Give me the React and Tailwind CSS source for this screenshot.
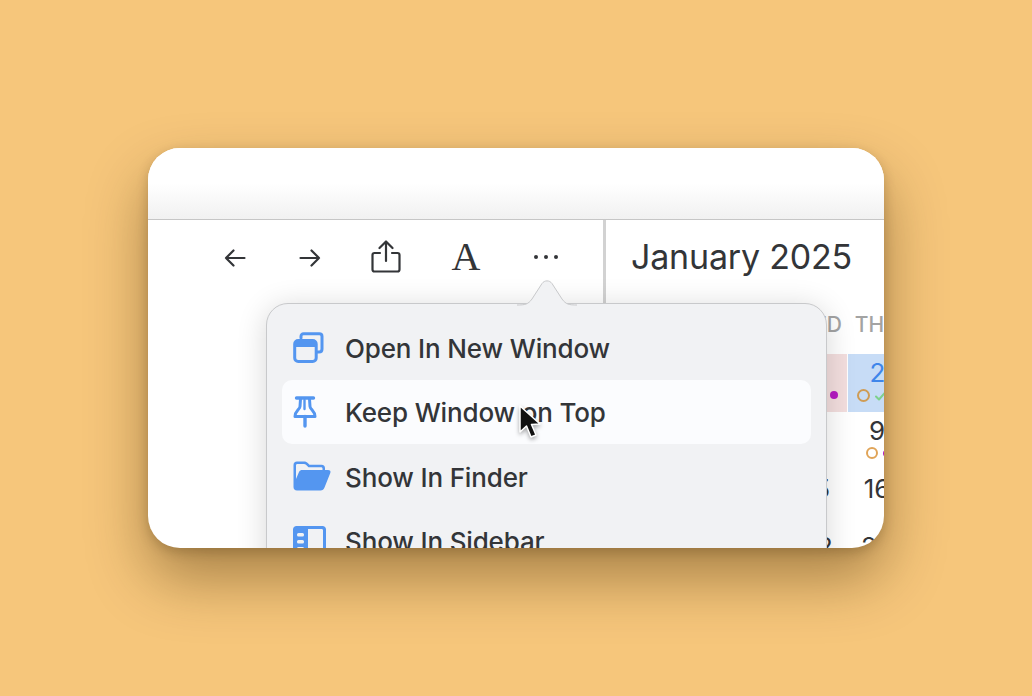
const menuItems = [
  { label: "Open In New Window", icon: <WindowsIcon />, active: false },
  { label: "Keep Window on Top", icon: <PinIcon />, active: true },
  { label: "Show In Finder", icon: <FolderIcon />, active: false },
  { label: "Show In Sidebar", icon: <SidebarIcon />, active: false },
];

const weekDays = ["SUN", "MON", "TUE", "WED", "THU"];

const weeks = [
  ["", "", "", "1", "2"],
  ["5", "6", "7", "8", "9"],
  ["12", "13", "14", "15", "16"],
  ["19", "20", "21", "22", "23"],
];

function BackIcon() {
  return (
    <svg width="22" height="20" viewBox="0 0 22 20" fill="none" stroke="#333538" strokeWidth="2.2" strokeLinecap="round" strokeLinejoin="round">
      <path d="M2 10H20.5M9.5 2.5L2 10L9.5 17.5" />
    </svg>
  );
}

function ForwardIcon() {
  return (
    <svg width="22" height="20" viewBox="0 0 22 20" fill="none" stroke="#333538" strokeWidth="2.2" strokeLinecap="round" strokeLinejoin="round">
      <path d="M1.5 10H20M12.5 2.5L20 10L12.5 17.5" />
    </svg>
  );
}

function ShareIcon() {
  return (
    <svg width="30" height="33" viewBox="0 0 30 33" fill="none" stroke="#333538" strokeWidth="2.2" strokeLinecap="round" strokeLinejoin="round">
      <path d="M15 2V21M8.5 8L15 1.5L21.5 8" />
      <path d="M9 13H3.5C2.2 13 1.5 13.8 1.5 15V29.5C1.5 30.8 2.2 31.5 3.5 31.5H26.5C27.8 31.5 28.5 30.8 28.5 29.5V15C28.5 13.8 27.8 13 26.5 13H21" />
    </svg>
  );
}

function WindowsIcon() {
  return (
    <svg width="31" height="31" viewBox="0 0 31 31" fill="none" stroke="#5496f0" strokeWidth="3" strokeLinecap="round" strokeLinejoin="round">
      <path d="M8 6V4.5C8 2.8 9 1.8 10.7 1.8H26.3C28 1.8 29 2.8 29 4.5V17C29 19 28 20 26 20H24.5" />
      <rect x="1.7" y="8.5" width="21.5" height="21" rx="3.5" />
      <path d="M2 12.5H23" strokeWidth="5" strokeLinecap="butt" />
    </svg>
  );
}

function PinIcon() {
  return (
    <svg width="24" height="32" viewBox="0 0 24 32" fill="none" stroke="#5496f0" strokeWidth="3" strokeLinecap="round" strokeLinejoin="round">
      <path d="M3.5 2H20.5" strokeWidth="3.4" />
      <path d="M7.5 3L7 10.5C6.8 13.5 2 15 2 20.5H22C22 15 17.2 13.5 17 10.5L16.5 3" />
      <path d="M12 20.5V30" strokeWidth="3.4" />
      <path d="M11.5 4V13" strokeWidth="2.4" />
    </svg>
  );
}

function FolderIcon() {
  return (
    <svg width="38" height="30" viewBox="0 0 38 30">
      <path
        fill="#5496f0"
        d="M0.5 4C0.5 1.8 1.8 0.5 4 0.5H11C12.8 0.5 13.8 1 15 2.2L16.5 3.8H28.5C30.8 3.8 32 5 32 7.2V9H29.5V7.8C29.5 6.8 29 6.3 28 6.3H15.5L13 3.8C12.4 3.2 11.8 3 11 3H4.5C3.5 3 3 3.5 3 4.5V18L6 11C6.8 9.4 7.8 9 9.3 9H35C37 9 38 10.2 37.3 12L31.5 26.5C30.8 28.5 29.5 29.5 27.5 29.5H4C1.8 29.5 0.5 28.2 0.5 26Z"
      />
    </svg>
  );
}

function SidebarIcon() {
  return (
    <svg width="33" height="30" viewBox="0 0 33 30">
      <path fill="#5496f0" d="M3.5 0H29.5C31.5 0 33 1.5 33 3.5V30H30V4.5C30 3.5 29.5 3 28.5 3H15V30H0V3.5C0 1.5 1.5 0 3.5 0Z" />
      <rect x="4" y="7" width="7" height="3.5" rx="1.5" fill="#f1f2f4" />
      <rect x="4" y="14" width="7" height="3.5" rx="1.5" fill="#f1f2f4" />
      <rect x="4" y="21" width="7" height="3.5" rx="1.5" fill="#f1f2f4" />
    </svg>
  );
}

function DayCell({ day }) {
  if (day === "1") {
    return (
      <div className="h-[58px] bg-[#f3dede] flex flex-col items-center">
        <span className="text-[26px] leading-[38px] text-[#333538]">{day}</span>
        <div className="ml-auto mr-[9px] mt-[-1px] w-[8px] h-[8px] rounded-full bg-[#b51cc2]" />
      </div>
    );
  }
  if (day === "2") {
    return (
      <div className="h-[58px] ml-px bg-[#c7dcf6] flex flex-col items-center">
        <span className="text-[26px] leading-[38px] text-[#3f86ea]">{day}</span>
        <div className="flex items-center gap-[5px] mt-[-3px]">
          <div className="w-[13px] h-[13px] rounded-full border-2 border-[#cf9c55]" />
          <svg width="11" height="10" viewBox="0 0 11 10" fill="none" stroke="#7ed18c" strokeWidth="2" strokeLinecap="round" strokeLinejoin="round">
            <path d="M1 5.5L4 8.5L10 1.5" />
          </svg>
          <div className="w-[8px] h-[8px] rounded-full bg-[#b51cc2]" />
        </div>
      </div>
    );
  }
  return (
    <div className="h-[58px] flex flex-col items-center">
      <span className="text-[26px] leading-[38px] text-[#333538]">{day}</span>
      {day === "9" && (
        <div className="flex items-center gap-[5px] mt-[-3px] ml-[2px]">
          <div className="w-[12px] h-[12px] rounded-full border-2 border-[#e0a458]" />
          <div className="w-[7px] h-[7px] rounded-full bg-[#b51cc2]" />
        </div>
      )}
    </div>
  );
}

export default function App() {
  return (
    <div className="w-[1032px] h-[696px] overflow-hidden bg-[#f6c67b] flex items-start justify-start pt-[148px] pl-[148px] font-['Inter',sans-serif]">
      <div className="relative w-[736px] h-[400px] overflow-hidden rounded-[32px] bg-white shadow-[0_30px_60px_rgba(60,35,0,0.42),0_4px_12px_rgba(60,35,0,0.22)] flex flex-col">
        {/* title bar */}
        <div className="h-[72px] shrink-0 border-b border-[#c6c6c6] bg-gradient-to-b from-white from-50% to-[#f1f1f1]" />

        <div className="flex flex-1 min-h-0">
          {/* left pane with toolbar */}
          <div className="w-[458px] shrink-0 border-r-[3px] border-[#d2d2d2]">
            <div className="h-[75px] flex items-center pl-[76px] text-[#333538]">
              <BackIcon />
              <div className="ml-[53px]"><ForwardIcon /></div>
              <div className="ml-[50px] mt-[-2px]"><ShareIcon /></div>
              <span className="ml-[50px] mt-[-2px] w-[30px] text-center font-['Liberation_Serif',serif] text-[40px] leading-none">A</span>
              <div className="ml-[53px] flex gap-[6px] mt-[-2px]">
                <div className="w-[4px] h-[4px] rounded-full bg-[#333538]" />
                <div className="w-[4px] h-[4px] rounded-full bg-[#333538]" />
                <div className="w-[4px] h-[4px] rounded-full bg-[#333538]" />
              </div>
            </div>
          </div>

          {/* calendar pane */}
          <div className="flex-1 min-w-0 overflow-hidden">
            <h1 className="pl-[25px] pt-[16px] h-[61px] text-[34px] leading-[42px] font-normal tracking-[-0.2px] text-[#333538] whitespace-nowrap">January 2025</h1>
            <div className="w-[300px] ml-px">
              <div className="grid grid-cols-5 h-[73px] pt-[32px] pl-[2px]">
                {weekDays.map((d) => (
                  <div key={d} className="text-center text-[21px] leading-[24px] font-medium text-[#a3a3a3]">{d}</div>
                ))}
              </div>
              {weeks.map((week, i) => (
                <div key={i} className="grid grid-cols-5">
                  {week.map((day, j) => (
                    <DayCell key={j} day={day} />
                  ))}
                </div>
              ))}
            </div>
          </div>
        </div>

        {/* popover */}
        <div className="absolute left-[118px] top-[155px] w-[561px] h-[300px] rounded-[22px] border border-[#c8c9cb] bg-[#f1f2f4] px-[15px] pt-[11px] shadow-[0_4px_30px_rgba(0,0,0,0.16)]">
          <svg className="absolute left-[250px] top-[-25px]" width="60" height="27" viewBox="0 0 60 27">
            <path d="M0 26C8 26 11 25.5 15 20L25 4.5C27.5 1 32.5 1 35 4.5L45 20C49 25.5 52 26 60 26V27H0Z" fill="#f1f2f4" />
            <path d="M0 26C8 26 11 25.5 15 20L25 4.5C27.5 1 32.5 1 35 4.5L45 20C49 25.5 52 26 60 26" fill="none" stroke="#c8c9cb" />
          </svg>
          {menuItems.map((item) => (
            <div
              key={item.label}
              className={`h-[64.5px] flex items-center rounded-[10px] ${item.active ? "bg-[#fbfcfe]" : ""}`}
            >
              <div className="w-[63px] pl-[11px] shrink-0 flex items-center">{item.icon}</div>
              <span className="text-[26px] pt-[2px] font-medium tracking-[-0.15px] text-[#333538] whitespace-nowrap">{item.label}</span>
            </div>
          ))}
        </div>

        {/* mouse pointer */}
        <svg className="absolute left-[370px] top-[256px] drop-shadow-[0_2px_2px_rgba(0,0,0,0.35)]" width="24" height="36" viewBox="0 0 24 36">
          <path d="M2 2V28L8.5 22L13 33L18 31L13.5 20.5L22 20Z" fill="#111" stroke="#fff" strokeWidth="1.5" strokeLinejoin="round" />
        </svg>
      </div>
    </div>
  );
}
